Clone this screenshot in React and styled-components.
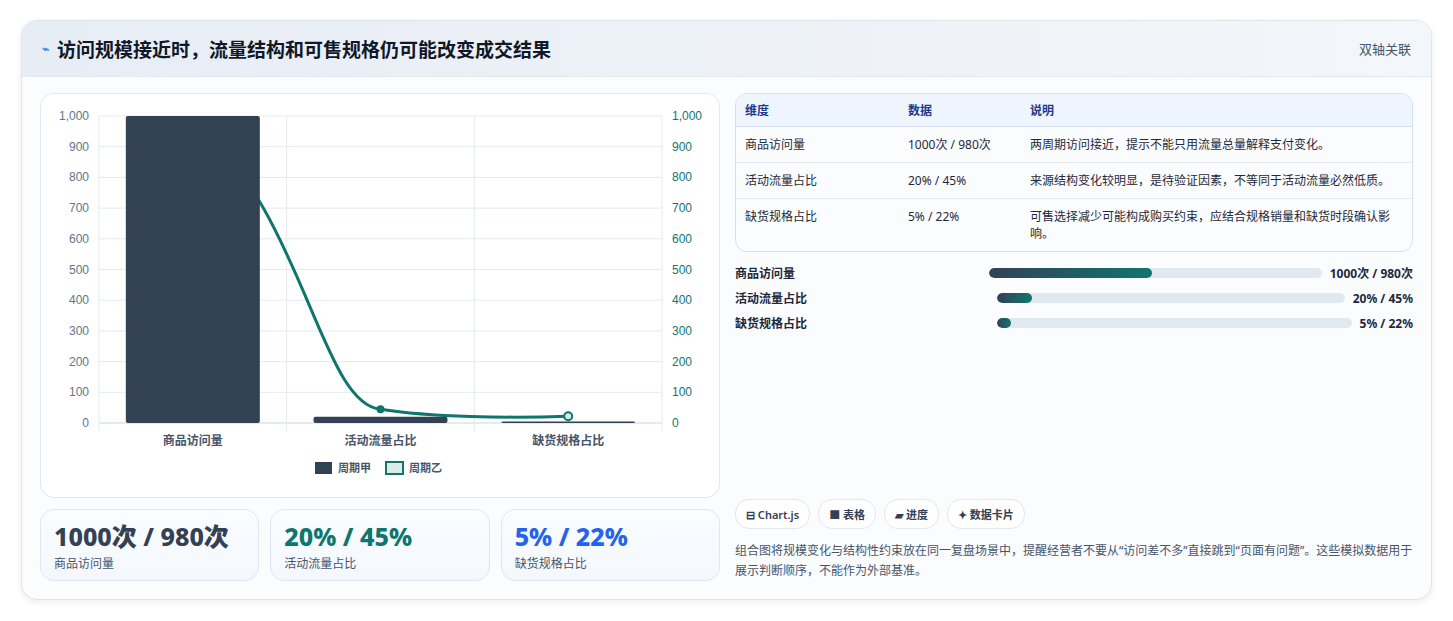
import React from "react";
import styled, { createGlobalStyle } from "styled-components";

const Global = createGlobalStyle`
  body { margin: 0; background: #ffffff; font-family: "Noto Sans", "Noto Sans CJK SC", sans-serif; color: #1e293b; }
`;

const Page = styled.div`
  padding: 20px 21px 21px 21px;
`;

const Card = styled.div`
  border: 1px solid #dfe5ee;
  border-radius: 16px;
  background: #fbfcfe;
  box-shadow: 0 2px 6px rgba(15, 23, 42, 0.08);
  overflow: hidden;
`;

const Header = styled.div`
  height: 55px;
  display: flex;
  align-items: center;
  justify-content: space-between;
  padding: 0 20px 0 20px;
  background: linear-gradient(90deg, #e7edf5, #f3f6fa);
  border-bottom: 1px solid #e3e9f1;
`;

const Title = styled.h1`
  margin: 0;
  font-size: 19px;
  font-weight: 700;
  color: #111827;
  display: flex;
  align-items: center;
  gap: 8px;
`;

const Tag = styled.span`
  font-size: 13px;
  color: #475569;
`;

const Body = styled.div`
  display: grid;
  grid-template-columns: 680px 1fr;
  gap: 15px;
  padding: 16px 18px 18px 18px;
`;

const LeftCol = styled.div`
  display: flex;
  flex-direction: column;
  gap: 11px;
`;

const ChartPanel = styled.div`
  height: 403px;
  border: 1px solid #e2e8f0;
  border-radius: 14px;
  background: #ffffff;
  overflow: hidden;
`;

const KpiRow = styled.div`
  display: grid;
  grid-template-columns: repeat(3, 1fr);
  gap: 11px;
`;

const Kpi = styled.div`
  height: 72px;
  box-sizing: border-box;
  border: 1px solid #dde6f2;
  border-radius: 14px;
  background: linear-gradient(180deg, #fafcff, #f4f8fd);
  padding: 10px 13px;
`;

const KpiValue = styled.div`
  font-size: 25px;
  font-weight: 800;
  line-height: 32px;
  color: ${p => p.$color};
`;

const KpiLabel = styled.div`
  font-size: 12px;
  color: #475569;
  margin-top: 2px;
`;

const RightCol = styled.div`
  display: flex;
  flex-direction: column;
`;

const TableBox = styled.div`
  border: 1px solid #d6e0ec;
  border-radius: 12px;
  overflow: hidden;
  background: #fbfcfe;
`;

const Table = styled.table`
  width: 100%;
  border-collapse: collapse;
  font-size: 12px;
  th {
    background: #eef5fe;
    color: #1e3a8a;
    text-align: left;
    font-weight: 600;
    height: 32px;
    padding: 0 9px;
    border-bottom: 1px solid #d6e0ec;
  }
  td {
    padding: 9px 9px;
    vertical-align: top;
    line-height: 17px;
    color: #1f2937;
    border-bottom: 1px solid #e5eaf1;
  }
  tr:last-child td { border-bottom: none; }
`;

const Bars = styled.div`
  display: flex;
  flex-direction: column;
  gap: 7px;
  margin-top: 12px;
`;

const BarRow = styled.div`
  display: grid;
  grid-template-columns: 246px 1fr auto;
  align-items: center;
  gap: 8px;
  font-size: 12px;
  font-weight: 600;
  height: 18px;
`;

const Track = styled.div`
  height: 10px;
  border-radius: 5px;
  background: #e2e8f0;
  overflow: hidden;
  margin-left: ${p => p.$offset}px;
`;

const Fill = styled.div`
  height: 100%;
  border-radius: 5px;
  background: linear-gradient(90deg, #334155, #0f766e);
`;

const BarValue = styled.span`
  font-weight: 700;
  color: #1e293b;
`;

const Chips = styled.div`
  display: flex;
  gap: 8px;
  margin-top: auto;
`;

const Chip = styled.span`
  border: 1px solid #e2e8f0;
  border-radius: 14px;
  background: #fff;
  padding: 0 10px;
  height: 28px;
  display: flex;
  align-items: center;
  gap: 4px;
  font-size: 11px;
  font-weight: 600;
  color: #334155;
`;

const Note = styled.p`
  margin: 12px 0 0 0;
  font-size: 12px;
  line-height: 20px;
  color: #475569;
`;

const X0 = 58, X1 = 621, Y0 = 22, Y1 = 329;
const yv = v => Y1 - ((Y1 - Y0) * v) / 1000;
const cats = ["商品访问量", "活动流量占比", "缺货规格占比"];
const a = [1000, 20, 5];
const colW = (X1 - X0) / 3;

function Chart() {
  const ticks = [0, 100, 200, 300, 400, 500, 600, 700, 800, 900, 1000];
  const cx = i => X0 + colW * (i + 0.5);
  const p1 = [cx(1), yv(45)], p2 = [cx(2), yv(22)];
  return (
    <svg width="680" height="403" viewBox="0 0 680 403" style={{ display: "block" }}>
      {ticks.map(t => (
        <g key={t}>
          <line x1={X0} x2={X1} y1={yv(t)} y2={yv(t)} stroke={t === 0 ? "#cbd5e1" : "#e5e9ef"} />
          <text x={X0 - 10} y={yv(t) + 4} textAnchor="end" fontSize="12" fill="#64748b" fontFamily="Liberation Sans">{t.toLocaleString("en-US")}</text>
          <text x={X1 + 10} y={yv(t) + 4} fontSize="12" fill="#0f766e" fontFamily="Liberation Sans">{t.toLocaleString("en-US")}</text>
        </g>
      ))}
      {[0, 1, 2, 3].map(i => (
        <line key={i} x1={X0 + colW * i} x2={X0 + colW * i} y1={Y0} y2={Y1 + 8} stroke="#e5e9ef" />
      ))}
      <path d={`M ${cx(0)} ${yv(980)} C ${cx(0) + 110} ${yv(700)}, ${p1[0] - 60} ${p1[1] - 5}, ${p1[0]} ${p1[1]} C ${p1[0] + 50} ${p1[1] + 8}, ${p2[0] - 60} ${p2[1] + 2}, ${p2[0]} ${p2[1]}`} fill="none" stroke="#0f766e" strokeWidth="3" />
      <circle cx={p1[0]} cy={p1[1]} r="4" fill="#0f766e" />
      <circle cx={p2[0]} cy={p2[1]} r="4" fill="#d6ebe8" stroke="#0f766e" strokeWidth="2" />
      {a.map((v, i) => (
        <rect key={i} x={cx(i) - 67} y={yv(v)} width="134" height={Y1 - yv(v)} rx="2" fill="#334155" />
      ))}
      {cats.map((c, i) => (
        <text key={c} x={cx(i)} y={351} textAnchor="middle" fontSize="12" fill="#475569" fontWeight="600">{c}</text>
      ))}
      <rect x="274" y="368" width="17" height="12" fill="#334155" />
      <text x="297" y="378" fontSize="11" fill="#475569" fontWeight="600">周期甲</text>
      <rect x="345" y="368" width="17" height="12" fill="#dcebe9" stroke="#0f766e" strokeWidth="2" />
      <text x="368" y="378" fontSize="11" fill="#475569" fontWeight="600">周期乙</text>
    </svg>
  );
}

const rows = [
  ["商品访问量", "1000次 / 980次", "两周期访问接近，提示不能只用流量总量解释支付变化。"],
  ["活动流量占比", "20% / 45%", "来源结构变化较明显，是待验证因素，不等同于活动流量必然低质。"],
  ["缺货规格占比", "5% / 22%", "可售选择减少可能构成购买约束，应结合规格销量和缺货时段确认影响。"],
];

const bars = [
  ["商品访问量", "1000次 / 980次", 49, 0],
  ["活动流量占比", "20% / 45%", 10, 8],
  ["缺货规格占比", "5% / 22%", 4, 8],
];

export default function App() {
  return (
    <Page>
      <Global />
      <Card>
        <Header>
          <Title><span style={{ color: "#3b82f6", fontSize: 12 }}>⌁</span>访问规模接近时，流量结构和可售规格仍可能改变成交结果</Title>
          <Tag>双轴关联</Tag>
        </Header>
        <Body>
          <LeftCol>
            <ChartPanel><Chart /></ChartPanel>
            <KpiRow>
              <Kpi><KpiValue $color="#334155">1000次 / 980次</KpiValue><KpiLabel>商品访问量</KpiLabel></Kpi>
              <Kpi><KpiValue $color="#0f766e">20% / 45%</KpiValue><KpiLabel>活动流量占比</KpiLabel></Kpi>
              <Kpi><KpiValue $color="#2563eb">5% / 22%</KpiValue><KpiLabel>缺货规格占比</KpiLabel></Kpi>
            </KpiRow>
          </LeftCol>
          <RightCol>
            <TableBox>
              <Table>
                <thead>
                  <tr><th style={{ width: 145 }}>维度</th><th style={{ width: 104 }}>数据</th><th>说明</th></tr>
                </thead>
                <tbody>
                  {rows.map(r => (
                    <tr key={r[0]}><td>{r[0]}</td><td>{r[1]}</td><td>{r[2]}</td></tr>
                  ))}
                </tbody>
              </Table>
            </TableBox>
            <Bars>
              {bars.map(b => (
                <BarRow key={b[0]}>
                  <span>{b[0]}</span>
                  <Track $offset={b[3]}><Fill style={{ width: `${b[2]}%` }} /></Track>
                  <BarValue>{b[1]}</BarValue>
                </BarRow>
              ))}
            </Bars>
            <Chips>
              <Chip>⊟ Chart.js</Chip>
              <Chip>■ 表格</Chip>
              <Chip>▰ 进度</Chip>
              <Chip>✦ 数据卡片</Chip>
            </Chips>
            <Note>组合图将规模变化与结构性约束放在同一复盘场景中，提醒经营者不要从“访问差不多”直接跳到“页面有问题”。这些模拟数据用于展示判断顺序，不能作为外部基准。</Note>
          </RightCol>
        </Body>
      </Card>
    </Page>
  );
}
